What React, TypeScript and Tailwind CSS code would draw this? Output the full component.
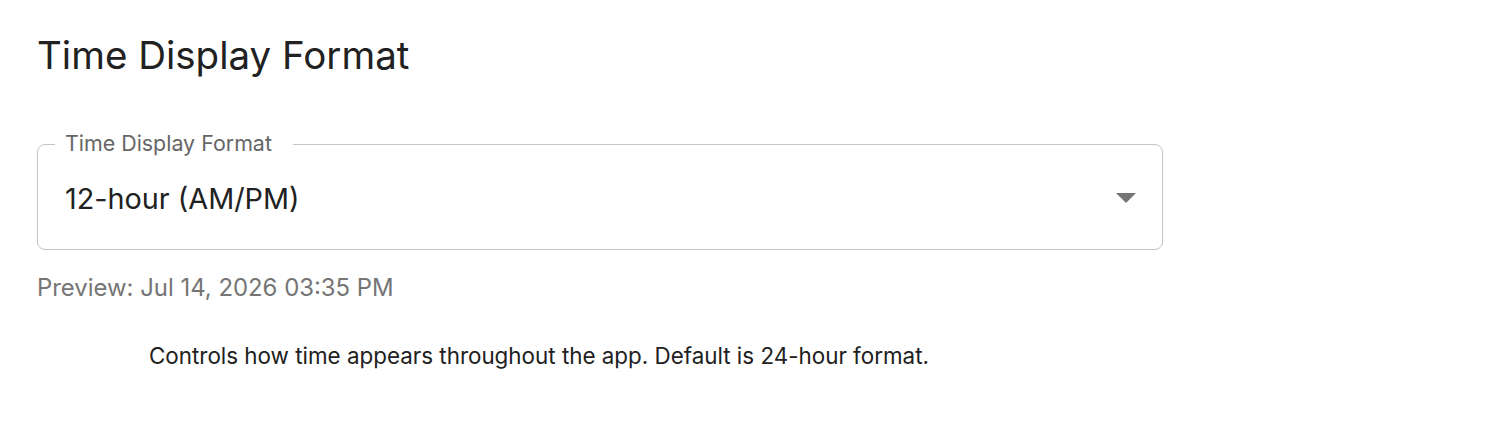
export default function App() {
  return (
    <div className="min-h-[422px] bg-white pl-[37px] pt-[30px] text-[#212121]" style={{ fontFamily: 'Inter, "Noto Sans", sans-serif' }}>
      <h1 className="text-[38.5px] leading-[50px] font-normal text-[#212121]">Time Display Format</h1>
      <div className="relative mt-[64px] flex h-[106px] w-[1126px] items-center rounded-[8px] border border-[#c4c4c4] pl-[27px] pr-[12px]">
        <span className="absolute left-[17px] top-[-16px] bg-white pl-[10px] pr-[21px] text-[21.4px] leading-[28px] text-[#666666]">Time Display Format</span>
        <span className="flex-1 pt-[3px] text-[28.8px] leading-[34px] text-[#212121]">12-hour (AM/PM)</span>
        <svg width="48" height="48" viewBox="0 0 24 24" className="shrink-0">
          <path d="M7 10l5 5 5-5z" fill="#757575" />
        </svg>
      </div>
      <p className="mt-[24px] text-[23.9px] leading-[28px] text-[#757575]">Preview: Jul 14, 2026 03:35 PM</p>
      <p className="mt-[40px] pl-[112px] text-[22.4px] leading-[28px] text-[#212121]">Controls how time appears throughout the app. Default is 24-hour format.</p>
    </div>
  );
}
